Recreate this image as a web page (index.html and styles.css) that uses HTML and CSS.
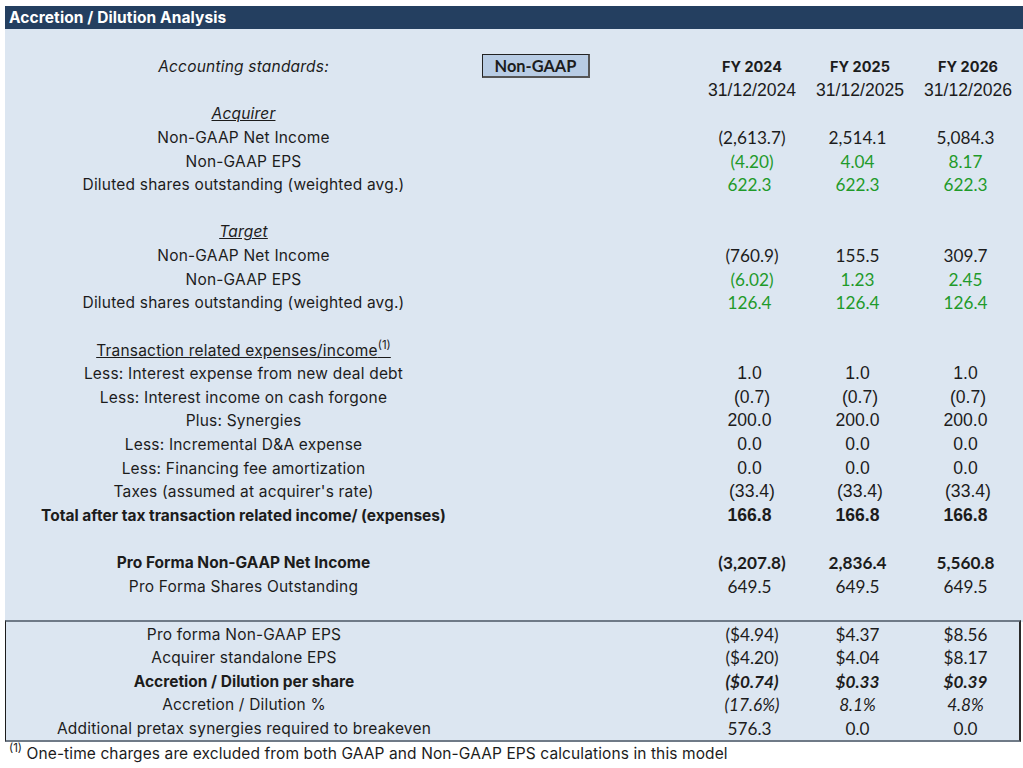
FILE: index.html
```html
<!DOCTYPE html>
<html>
<head>
<meta charset="utf-8">
<link rel="stylesheet" href="styles.css">
</head>
<body>
<div class="page">
  <div class="titlebar">Accretion / Dilution Analysis</div>
  <div class="sheet">
    <div class="row">
      <div class="lbl it">Accounting standards:</div>
      <div class="sel">Non-GAAP</div>
      <div></div>
      <div class="hd">FY 2024</div>
      <div class="hd">FY 2025</div>
      <div class="hd">FY 2026</div>
    </div>
    <div class="row">
      <div></div><div></div><div></div>
      <div class="date">31/12/2024</div>
      <div class="date">31/12/2025</div>
      <div class="date">31/12/2026</div>
    </div>
    <div class="row"><div class="lbl it ul">Acquirer</div></div>
    <div class="row">
      <div class="lbl">Non-GAAP Net Income</div><div></div><div></div>
      <div class="num">(2,613.7)</div><div class="num pos">2,514.1</div><div class="num pos">5,084.3</div>
    </div>
    <div class="row">
      <div class="lbl">Non-GAAP EPS</div><div></div><div></div>
      <div class="num grn">(4.20)</div><div class="num grn pos">4.04</div><div class="num grn pos">8.17</div>
    </div>
    <div class="row">
      <div class="lbl">Diluted shares outstanding (weighted avg.)</div><div></div><div></div>
      <div class="num grn pos">622.3</div><div class="num grn pos">622.3</div><div class="num grn pos">622.3</div>
    </div>
    <div class="row"></div>
    <div class="row"><div class="lbl it ul">Target</div></div>
    <div class="row">
      <div class="lbl">Non-GAAP Net Income</div><div></div><div></div>
      <div class="num">(760.9)</div><div class="num pos">155.5</div><div class="num pos">309.7</div>
    </div>
    <div class="row">
      <div class="lbl">Non-GAAP EPS</div><div></div><div></div>
      <div class="num grn">(6.02)</div><div class="num grn pos">1.23</div><div class="num grn pos">2.45</div>
    </div>
    <div class="row">
      <div class="lbl">Diluted shares outstanding (weighted avg.)</div><div></div><div></div>
      <div class="num grn pos">126.4</div><div class="num grn pos">126.4</div><div class="num grn pos">126.4</div>
    </div>
    <div class="row"></div>
    <div class="row"><div class="lbl"><span class="ul">Transaction related expenses/income<sup>(1)</sup></span></div></div>
    <div class="row">
      <div class="lbl">Less: Interest expense from new deal debt</div><div></div><div></div>
      <div class="ar pos">1.0</div><div class="ar pos">1.0</div><div class="ar pos">1.0</div>
    </div>
    <div class="row">
      <div class="lbl">Less: Interest income on cash forgone</div><div></div><div></div>
      <div class="ar">(0.7)</div><div class="ar">(0.7)</div><div class="ar">(0.7)</div>
    </div>
    <div class="row">
      <div class="lbl">Plus: Synergies</div><div></div><div></div>
      <div class="ar pos">200.0</div><div class="ar pos">200.0</div><div class="ar pos">200.0</div>
    </div>
    <div class="row">
      <div class="lbl">Less: Incremental D&amp;A expense</div><div></div><div></div>
      <div class="ar pos">0.0</div><div class="ar pos">0.0</div><div class="ar pos">0.0</div>
    </div>
    <div class="row">
      <div class="lbl">Less: Financing fee amortization</div><div></div><div></div>
      <div class="ar pos">0.0</div><div class="ar pos">0.0</div><div class="ar pos">0.0</div>
    </div>
    <div class="row">
      <div class="lbl">Taxes (assumed at acquirer's rate)</div><div></div><div></div>
      <div class="ar">(33.4)</div><div class="ar">(33.4)</div><div class="ar">(33.4)</div>
    </div>
    <div class="row">
      <div class="lbl b">Total after tax transaction related income/ (expenses)</div><div></div><div></div>
      <div class="ar b pos">166.8</div><div class="ar b pos">166.8</div><div class="ar b pos">166.8</div>
    </div>
    <div class="row"></div>
    <div class="row">
      <div class="lbl b">Pro Forma Non-GAAP Net Income</div><div></div><div></div>
      <div class="num b">(3,207.8)</div><div class="num b pos">2,836.4</div><div class="num b pos">5,560.8</div>
    </div>
    <div class="row">
      <div class="lbl">Pro Forma Shares Outstanding</div><div></div><div></div>
      <div class="num pos">649.5</div><div class="num pos">649.5</div><div class="num pos">649.5</div>
    </div>
    <div class="row"></div>
  </div>
  <div class="box">
    <div class="row">
      <div class="lbl">Pro forma Non-GAAP EPS</div><div></div><div></div>
      <div class="num">($4.94)</div><div class="num pos">$4.37</div><div class="num pos">$8.56</div>
    </div>
    <div class="row">
      <div class="lbl">Acquirer standalone EPS</div><div></div><div></div>
      <div class="num">($4.20)</div><div class="num pos">$4.04</div><div class="num pos">$8.17</div>
    </div>
    <div class="row">
      <div class="lbl b">Accretion / Dilution per share</div><div></div><div></div>
      <div class="num b it">($0.74)</div><div class="num b it pos">$0.33</div><div class="num b it pos">$0.39</div>
    </div>
    <div class="row">
      <div class="lbl">Accretion / Dilution %</div><div></div><div></div>
      <div class="num it">(17.6%)</div><div class="num it pos">8.1%</div><div class="num it pos">4.8%</div>
    </div>
    <div class="row">
      <div class="lbl">Additional pretax synergies required to breakeven</div><div></div><div></div>
      <div class="num pos">576.3</div><div class="num pos">0.0</div><div class="num pos">0.0</div>
    </div>
  </div>
  <div class="foot"><sup>(1)</sup> One-time charges are excluded from both GAAP and Non-GAAP EPS calculations in this model</div>
</div>
</body>
</html>
```
FILE: styles.css
```css
html, body {
  margin: 0;
  padding: 0;
  background: #ffffff;
}
.page {
  padding: 6px 0 0 5px;
  font-family: "Inter", "Open Sans", sans-serif;
  color: #1c1c1c;
}
.titlebar {
  height: 23px;
  line-height: 24px;
  background: #243f60;
  color: #ffffff;
  font-weight: 700;
  font-size: 15.5px;
  letter-spacing: 0.1px;
  padding-left: 4px;
  width: 1014px;
}
.sheet {
  background: #dce6f1;
  width: 1018px;
  padding-top: 25.7px;
}
.row {
  display: grid;
  grid-template-columns: 477px 108px 108px 108px 108px 108px;
  height: 23.64px;
  align-items: center;
}
.row > div {
  text-align: center;
  white-space: nowrap;
}
.lbl {
  font-size: 15.5px;
  letter-spacing: 0.2px;
}
.lbl.b {
  letter-spacing: 0;
}
.it { font-style: italic; }
.ul { text-decoration: underline; }
.b { font-weight: 700; }
sup {
  font-size: 11.5px;
  vertical-align: 7px;
  line-height: 0;
  letter-spacing: 0;
}
.sel {
  box-sizing: border-box;
  height: 24px;
  margin-top: -1.5px;
  background: #b8cce4;
  border: 1px solid #222;
  border-right: 2px solid #555;
  border-bottom: 2px solid #555;
  font-family: "Lato", sans-serif;
  font-weight: 700;
  font-size: 16.4px;
  line-height: 21px;
}
.hd {
  font-weight: 700;
  font-size: 14.5px;
}
.date {
  font-family: "Liberation Sans", Arial, sans-serif;
  font-size: 17.6px;
}
.num {
  font-family: "Lato", sans-serif;
  font-size: 17.2px;
}
.ar {
  font-family: "Liberation Sans", Arial, sans-serif;
  font-size: 17.6px;
}
.pos { padding-right: 5px; }
.grn { color: #1f9a2a; }
.box {
  background: #dce6f1;
  width: 1013px;
  border: 1px solid #1c1c1c;
  border-top: 2px solid #6f7a87;
  border-bottom: 2px solid #6f7a87;
  border-right: 2px solid #2a2a2a;
  margin-top: -1.5px;
}
.box .row {
  grid-template-columns: 476px 108px 108px 108px 108px 108px;
}
.foot {
  height: 23.64px;
  line-height: 23.64px;
  padding-left: 4px;
  font-size: 15.5px;
  letter-spacing: 0.1px;
}
```
